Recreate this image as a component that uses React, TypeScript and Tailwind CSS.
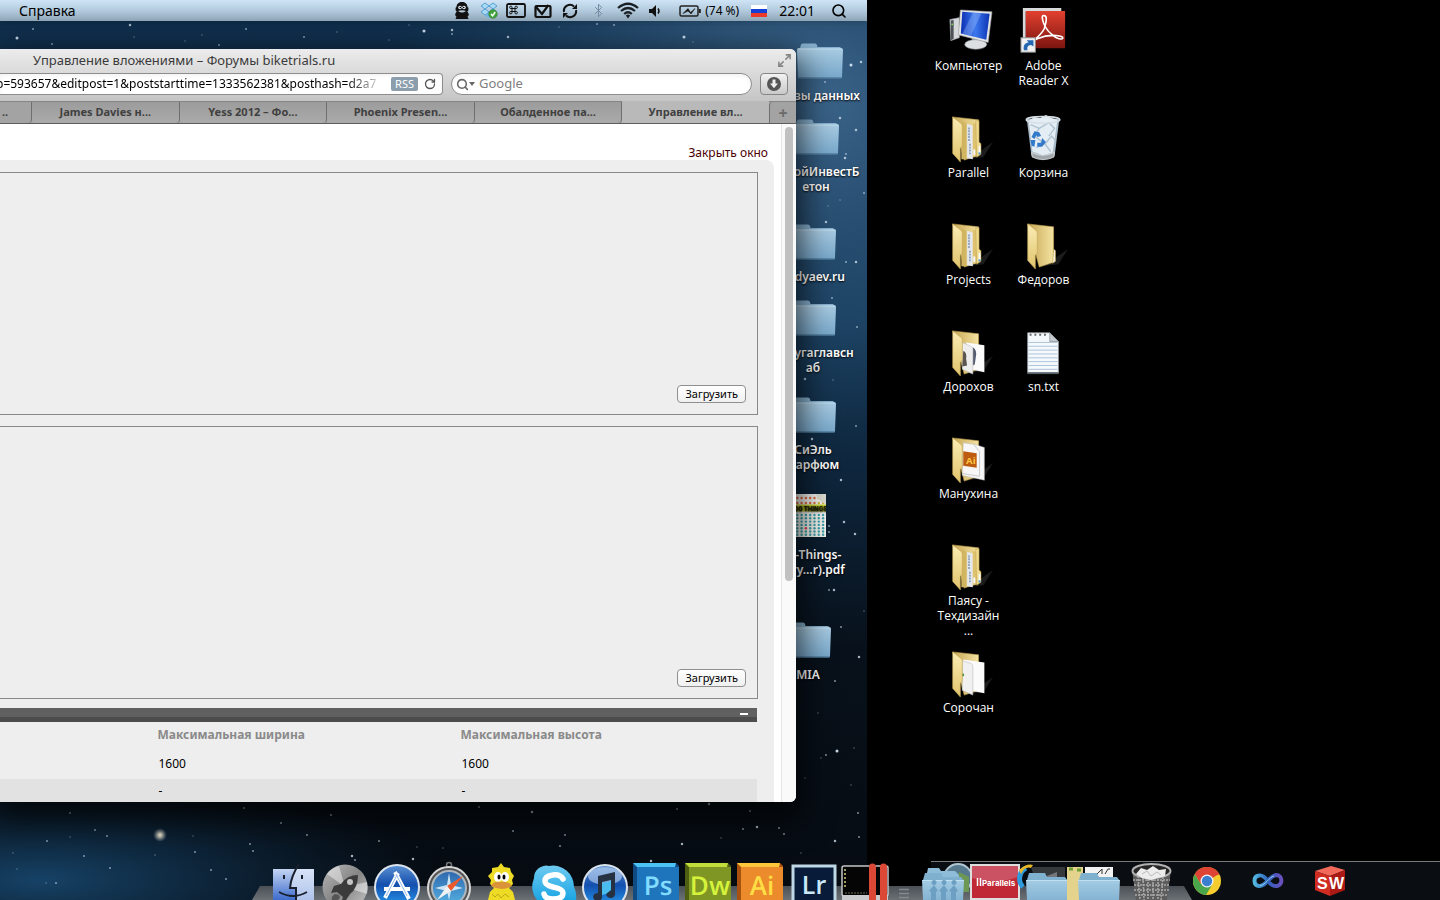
import type { ReactNode } from 'react';
import { Bluetooth, Maximize2, RotateCw, Search, Wifi } from 'lucide-react';

const stars = [
  [47, 841, 2], [70, 837, 1], [107, 836, 2], [84, 856, 2], [95, 830, 2], [46, 883, 1], [56, 883, 2], [110, 868, 2], [17, 869, 1],
  [13, 853, 1], [244, 808, 2], [193, 836, 1], [195, 852, 2], [250, 844, 2], [253, 851, 2], [226, 879, 2], [211, 870, 2],
  [281, 823, 2], [307, 835, 2], [352, 856, 3], [355, 860, 2], [379, 841, 2], [413, 859, 3], [443, 848, 1], [417, 847, 1],
  [513, 831, 2], [532, 812, 3], [560, 846, 2], [565, 835, 2], [479, 807, 2], [331, 815, 2], [70, 813, 2], [155, 855, 1],
  [837, 751, 4], [826, 755, 2], [821, 758, 1], [854, 748, 1], [858, 813, 2], [859, 837, 2], [835, 841, 3], [757, 827, 3],
  [750, 811, 2], [682, 844, 3], [677, 809, 2], [709, 804, 3], [651, 861, 3], [779, 828, 2], [784, 834, 2], [743, 829, 2],
  [721, 838, 1], [835, 681, 2], [859, 657, 3], [818, 713, 1], [805, 778, 1], [851, 785, 1], [801, 853, 1],
  [33, 29, 2], [17, 38, 4], [52, 44, 2], [130, 25, 3], [134, 37, 1], [246, 29, 2], [304, 37, 2], [337, 32, 1], [409, 25, 1],
  [424, 31, 4], [185, 41, 1], [219, 45, 2], [452, 30, 3], [452, 34, 2], [508, 37, 3], [597, 24, 2], [614, 25, 2],
  [684, 37, 4], [559, 27, 1], [389, 40, 1], [202, 35, 1], [693, 42, 1],
  [851, 65, 4], [861, 62, 3], [840, 118, 3], [856, 130, 3], [845, 158, 3], [846, 154, 2], [826, 222, 3], [856, 262, 3],
  [846, 262, 2], [825, 82, 2], [828, 206, 1], [864, 193, 2], [832, 298, 2], [857, 327, 2], [848, 174, 1], [840, 200, 1],
  [805, 379, 3], [812, 439, 3], [856, 426, 2], [844, 522, 3], [855, 534, 3], [829, 590, 2], [834, 590, 3], [841, 627, 2],
  [812, 466, 1], [841, 480, 3], [829, 526, 2], [829, 532, 2], [864, 611, 1], [833, 380, 1],
];

const desktopItems = [
  { name: ['Базы данных'], pos: 'top-[43px] -right-[7px]' },
  { name: ['СтройИнвестБ', 'етон'], pos: 'top-[119px] -right-[3px]' },
  { name: ['Fedyaev.ru'], pos: 'top-[224px] right-0' },
  { name: ['Калугаглавсн', 'аб'], pos: 'top-[300px] right-0' },
  { name: ['СиЭль', 'Парфюм'], pos: 'top-[397px] right-0' },
  { name: ['100-Things-', 'Every…r).pdf'], pos: 'top-[494px] right-[5px]', pdf: true },
  { name: ['MIA'], pos: 'top-[622px] right-[5px]' },
];

const tabs = ['James Davies н...', 'Yess 2012 – Фо...', 'Phoenix Presen...', 'Обалденное па...'];

function Sky() {
  return (
    <svg className="absolute inset-0 size-full" viewBox="0 0 867 900" preserveAspectRatio="none" aria-hidden="true">
      <defs>
        <linearGradient id="sky" x1="0" y1="0" x2="0" y2="1">
          <stop offset="0" stopColor="#0f2e4b" />
          <stop offset="0.35" stopColor="#163a59" />
          <stop offset="0.55" stopColor="#0d2338" />
          <stop offset="0.72" stopColor="#08111b" />
          <stop offset="1" stopColor="#060b11" />
        </linearGradient>
        <radialGradient id="haze">
          <stop offset="0" stopColor="#426d94" stopOpacity="0.9" />
          <stop offset="1" stopColor="#2a5379" stopOpacity="0" />
        </radialGradient>
        <radialGradient id="hazeLow">
          <stop offset="0" stopColor="#17456b" stopOpacity="0.95" />
          <stop offset="1" stopColor="#0e2c45" stopOpacity="0" />
        </radialGradient>
        <radialGradient id="glow">
          <stop offset="0" stopColor="#fffbe8" />
          <stop offset="0.35" stopColor="#d6d0bd" stopOpacity="0.8" />
          <stop offset="1" stopColor="#8899a8" stopOpacity="0" />
        </radialGradient>
      </defs>
      <rect width="867" height="900" fill="url(#sky)" />
      <ellipse cx="800" cy="100" rx="420" ry="330" fill="url(#haze)" />
      <ellipse cx="40" cy="880" rx="400" ry="110" fill="url(#hazeLow)" />
      {stars.map(([x, y, s]) => (
        <circle key={`${x}-${y}`} cx={x} cy={y} r={0.5 + s * 0.25} fill="#d5e6f5" opacity={0.25 + s * 0.17} />
      ))}
      <circle cx="160" cy="835" r="7" fill="url(#glow)" />
    </svg>
  );
}

function MacFolder({ className }: { className?: string }) {
  return (
    <svg className={className} width="48" height="36" viewBox="0 0 48 36" aria-hidden="true">
      <defs>
        <linearGradient id="macFolder" x1="0" y1="0" x2="0" y2="1">
          <stop offset="0" stopColor="#a9cce3" />
          <stop offset="1" stopColor="#78a8cb" />
        </linearGradient>
      </defs>
      <path d="M2 6 Q2 5 4 5 L5 1.500 Q5.500 .5 7 .5 H19 Q20.500 .5 21 2 L21.500 4 H44 L46 6 V10 H2Z" fill="#88b2d0" />
      <path d="M1 7 Q1 5.500 2.500 5.500 H45.500 Q47 5.500 47 7 L46 34 Q46 35.500 44.500 35.500 H3 Q2 35.500 2 34Z" fill="url(#macFolder)" />
      <path d="M1.500 6 H46.500" stroke="#c2dff0" />
      <path d="M2.500 35 H45.500" stroke="#3e6888" />
    </svg>
  );
}

function PdfFile() {
  const dots: ReactNode[] = [];
  for (let r = 0; r < 9; r++) {
    for (let c = 0; c < 8; c++) {
      const top = r < 2;
      dots.push(
        <circle key={`${r}-${c}`} cx={3 + c * 4.3} cy={top ? 4 + r * 5 : 21 + (r - 2) * 3.3} r="1.2"
          fill={top ? ['#e76a3c', '#d9b53a'][c > 5 ? 1 : 0] : r === 6 && c === 3 ? '#e33d4f' : '#3fa5ad'} />
      );
    }
  }
  return (
    <svg width="36" height="44" viewBox="0 0 36 44" aria-hidden="true">
      <rect width="36" height="43" fill="#f5f5f1" />
      {dots}
      <rect y="10.500" width="36" height="7" fill="#c9d32c" />
      <text x="4" y="16.500" fontSize="6" fontWeight="900" fontFamily="Inter, sans-serif" fill="#1e220b">00 THINGS</text>
      <path d="M26 0 H36 V10 Q29 8 26 0Z" fill="#deddd2" />
    </svg>
  );
}

function MenuBar() {
  return (
    <header className="relative z-20 flex h-[21px] items-center bg-linear-to-b from-[#cfe4f6] via-[#b3cbde] to-[#8ea5b6] pr-5 pl-[19px] text-sm text-black shadow-md">
      <button className="mr-auto">Справка</button>
      <span className="flex w-[27px] justify-center">
        <svg width="16" height="18" viewBox="0 0 16 18" aria-label="Adium">
          <path d="M8 0 C11 0 13.500 2 13.500 5 Q14.500 5 14.500 7 Q14.500 9 13.200 9.500 C15.500 12 15 14 13.500 14.500 L14.500 17 H1.500 L2.500 14.500 C1 14 .5 12 2.800 9.500 Q1.500 9 1.500 7 Q1.500 5 2.500 5 C2.500 2 5 0 8 0Z" fill="#111" />
          <circle cx="6" cy="5.500" r="1.800" fill="#dce9f3" /><circle cx="10" cy="5.500" r="1.800" fill="#dce9f3" />
          <circle cx="6.300" cy="5.500" r=".8" /><circle cx="9.700" cy="5.500" r=".8" />
          <path d="M4 9 Q8 7.500 12 9 Q8 12 4 9Z" fill="#b8cbda" />
        </svg>
      </span>
      <span className="flex w-[27px] justify-center">
        <svg width="18" height="17" viewBox="0 0 18 17" aria-label="Dropbox">
          <path d="M5 1 L9 4 L5 7 L1 4Z M13 1 L17 4 L13 7 L9 4Z M5 7 L9 10 L5 13 L1 10Z M13 7 L17 10 L13 13 L9 10Z" fill="#a9daf6" stroke="#3f92cc" strokeWidth=".8" />
          <path d="M5 13.500 L9 11 L13 13.500 L9 16Z" fill="#6bb5e2" />
          <circle cx="13" cy="12" r="4.300" fill="#3fa33a" stroke="#2a7427" strokeWidth=".5" />
          <path d="M11 12 L12.600 13.800 L15.200 10" stroke="#fff" strokeWidth="1.500" fill="none" />
        </svg>
      </span>
      <span className="flex w-[27px] justify-center">
        <svg width="20" height="15" viewBox="0 0 20 15" fill="none" stroke="#111" aria-label="Command">
          <rect x="1" y="1" width="18" height="13" rx="1.500" strokeWidth="1.800" />
          <path d="M6 5.500 H9 V8.500 H6Z M6 5.500 H4.800 A1.200 1.200 0 1 1 6 4.300Z M9 5.500 V4.300 A1.200 1.200 0 1 1 10.200 5.500Z M9 8.500 H10.200 A1.200 1.200 0 1 1 9 9.700Z M6 8.500 V9.700 A1.200 1.200 0 1 1 4.800 8.500Z" strokeWidth="1" />
        </svg>
      </span>
      <span className="flex w-[27px] justify-center">
        <svg width="18" height="16" viewBox="0 0 18 16" fill="none" stroke="#111" strokeWidth="2.200" aria-label="Mail">
          <rect x="1.500" y="3" width="15" height="11" rx="1" />
          <path d="M2 4 L8 11 L14.500 2" />
        </svg>
      </span>
      <span className="flex w-[27px] justify-center">
        <svg width="18" height="16" viewBox="0 0 18 16" fill="none" stroke="#111" strokeWidth="2" aria-label="Sync">
          <path d="M3 9 A6 6 0 0 1 13 3.500 M15 7 A6 6 0 0 1 5 12.500" />
          <path d="M16 1 V6 H11Z M2 15 V10 H7Z" fill="#111" stroke="none" />
        </svg>
      </span>
      <span className="flex w-[30px] justify-center text-[#7389a0]"><Bluetooth size={15} strokeWidth={1.5} /></span>
      <span className="flex w-[30px] justify-center">
        <svg width="22" height="17" viewBox="0 0 22 17" fill="none" stroke="#1a2026" strokeWidth="2.200" aria-label="Wi-Fi">
          <path d="M1 6 Q11 -2.500 21 6 M4 9 Q11 3 18 9 M7.200 12 Q11 8.500 14.800 12" />
          <path d="M8.800 13.500 Q11 11.500 13.200 13.500 L11 16.500Z" fill="#1a2026" stroke="none" />
        </svg>
      </span>
      <span className="flex w-6 justify-center">
        <svg width="12" height="12" viewBox="0 0 12 12" aria-label="Volume">
          <path d="M0 4 H3 L7 0 V12 L3 8 H0Z" fill="#111" />
          <path d="M9 3.500 Q11 6 9 8.500" stroke="#111" strokeWidth="1.500" fill="none" />
        </svg>
      </span>
      <span className="flex w-[38px] justify-end pr-1">
        <svg width="22" height="12" viewBox="0 0 22 12" fill="none" stroke="#222" aria-label="Battery">
          <rect x="1" y="1" width="18" height="10" rx="1.500" strokeWidth="1.500" />
          <path d="M20.800 4 V8" strokeWidth="2" />
          <path d="M4 8.500 L9 3.500 L11.500 7.500 L16 3.500 L12 9 L9 6Z" fill="#111" strokeWidth=".6" />
        </svg>
      </span>
      <span className="text-xs">(74 %)</span>
      <svg className="mr-3 ml-3" width="16" height="12" viewBox="0 0 16 12" aria-label="RU">
        <rect width="16" height="4" fill="#fff" /><rect y="4" width="16" height="4" fill="#1540d8" /><rect y="8" width="16" height="4" fill="#ec3a2a" />
      </svg>
      <time className="mr-4">22:01</time>
      <Search size={16} strokeWidth={2.4} />
    </header>
  );
}

function BrowserWindow() {
  return (
    <section className="absolute top-[49px] right-[71px] left-0 z-10 overflow-hidden rounded-r-md bg-white shadow-[0_12px_32px_6px_rgba(0,0,0,0.7)]">
      <div className="relative bg-linear-to-b from-[#ececec] to-[#b4b4b4]">
        <h1 className="h-6 pl-[33px] text-[13px] leading-[23px] text-[#3b3b3b]">Управление вложениями – Форумы biketrials.ru</h1>
        <Maximize2 className="absolute top-1 right-1 text-[#858585]" size={15} strokeWidth={2.5} />
        <div className="flex h-7 items-start pr-2">
          <div className="flex h-[22px] w-[443px] items-center rounded-r border border-l-0 border-[#8d8d8d] bg-white pr-[6px] shadow-inner">
            <input
              aria-label="Адрес"
              className="-ml-1 min-w-0 flex-1 bg-transparent mask-r-from-90% text-[12px] text-black outline-none"
              defaultValue="p=593657&editpost=1&poststarttime=1333562381&posthash=d2a7"
            />
            <button className="mx-[6px] h-[14px] rounded-xs bg-[#8c9dac] px-1 text-[11px] leading-[14px] text-white">RSS</button>
            <button aria-label="Обновить" className="text-[#555]"><RotateCw size={12} strokeWidth={2.6} /></button>
          </div>
          <label className="mx-2 flex h-[22px] flex-1 items-center rounded-full border border-[#8d8d8d] bg-white pl-1 shadow-inner">
            <Search size={13} strokeWidth={2.8} className="text-[#666]" />
            <span className="mr-1 border-x-3 border-t-4 border-x-transparent border-t-[#666]" />
            <input aria-label="Google" placeholder="Google" className="min-w-0 flex-1 bg-transparent text-[13px] outline-none placeholder:text-[#808080]" />
          </label>
          <button aria-label="Загрузки" className="flex h-[22px] w-7 items-center justify-center rounded border border-[#858585] bg-linear-to-b from-[#f2f2f2] to-[#c9c9c9]">
            <svg width="14" height="14" viewBox="0 0 14 14">
              <circle cx="7" cy="7" r="7" fill="#555" />
              <path d="M5.500 2.500 H8.500 V6.500 H11 L7 11.200 L3 6.500 H5.500Z" fill="#eee" />
            </svg>
          </button>
        </div>
        <nav className="flex h-[23px] border-y border-t-[#858585] border-b-[#5d5d5d] bg-[#a3a3a3] text-[11px] font-bold text-[#404040]">
          <button className="w-8 rounded-b border-r border-[#6f6f6f] pl-[2px] text-left">..</button>
          {tabs.map((tab) => (
            <button key={tab} className="flex-1 truncate rounded-b border-r border-[#6f6f6f] bg-linear-to-b from-[#9c9c9c] to-[#aaaaaa] px-1">{tab}</button>
          ))}
          <button className="-mt-px flex-1 truncate bg-[#b9b9b9] px-1">Управление вл...</button>
          <button aria-label="Новая вкладка" className="w-[27px] rounded-tl border-l border-[#6f6f6f] text-base leading-5 text-[#6a6a6a]">+</button>
        </nav>
      </div>

      <div className="flex text-xs">
        <main className="min-w-0 flex-1 pt-[22px] pr-[7px]">
          <p className="pr-[6px] text-right leading-[14px]"><a href="#close" className="text-[#4c0000]">Закрыть окно</a></p>
          <div className="rounded-tr-lg bg-[#eee] pt-3 pr-4">
            <div className="flex h-[243px] items-end justify-end border border-l-0 border-[#888] p-[11px]">
              <UploadButton />
            </div>
            <div className="mt-[11px] flex h-[273px] items-end justify-end border border-l-0 border-[#888] p-[11px]">
              <UploadButton />
            </div>
            <div className="mt-[9px] mr-px flex h-[14px] justify-end border-b-[5px] border-[#4c4c4c] bg-[#606060] pt-[5px] pr-[9px]">
              <span className="h-[2px] w-2 bg-white" />
            </div>
            <table className="w-full table-fixed border-r border-[#eee] text-left">
              <thead>
                <tr className="h-[26px] text-[#8a8a8a]">
                  <td className="w-[20%]" />
                  <th className="w-[40%] pl-[6px]">Максимальная ширина</th>
                  <th className="pl-[6px]">Максимальная высота</th>
                </tr>
              </thead>
              <tbody>
                <tr className="h-[31px]"><td /><td className="pl-[7px]">1600</td><td className="pl-[7px]">1600</td></tr>
                <tr className="h-[23px] bg-[#e2e2e2]"><td /><td className="pl-[7px]">-</td><td className="pl-[7px]">-</td></tr>
              </tbody>
            </table>
          </div>
        </main>
        <div className="w-[15px] border-l border-[#e5e5e5] bg-[#fafafa] pt-[3px] pl-[3px]">
          <div className="h-[454px] w-2 rounded-full bg-[#c1c1c1]" />
        </div>
      </div>
    </section>
  );
}

function UploadButton() {
  return (
    <button className="h-[18px] rounded border border-[#8f8f8f] bg-linear-to-b from-white to-[#f0f0f0] px-[7px] text-[11px] leading-4 text-black">Загрузить</button>
  );
}

function WinFolder({ kind }: { kind: string }) {
  return (
    <>
      <path d="M22 46 L36 38 L50 28 L40 44Z" fill="#1c1c1c" />
      <path d="M8 2 L35 5 V42 L20 47Z" fill="url(#winBack)" stroke="#b99b4b" strokeWidth=".6" />
      {kind === 'stack' && (
        <>
          <path d="M17 6 L22 9 V46 L17 46Z" fill="#d2b561" />
          <path d="M23 9 L29 11 V46 L23 45Z" fill="#e4e7ec" />
          <path d="M25 13 V28 M26 30 V42" stroke="#6886a6" strokeWidth="1.300" strokeDasharray="2 1" />
          <path d="M29 8 L32 9 V27 L33 30 V43 L29 44Z" fill="#dfc26d" />
          <path d="M32 6 L35.500 6 V28 L37.500 30 V41 L33 44Z" fill="#efd98d" stroke="#b49440" strokeWidth=".5" />
          <path d="M30.500 36 V42 M36 32 V40" stroke="#f5f8fc" strokeWidth="2" />
          <path d="M36 39 V41" stroke="#3d8ed0" strokeWidth="2" />
        </>
      )}
      {kind === 'papers' && (
        <>
          <path d="M19 10 L41 13 V45 L19 41Z" fill="#fbfbfb" />
          <path d="M18 11 L27 14 Q29 15 29 17 V47 L18 42Z" fill="#f0f0f0" stroke="#bbb" strokeWidth=".6" />
          <circle cx="18.500" cy="26" r="1.500" fill="#4b8b3b" />
        </>
      )}
      {kind === 'photos' && (
        <>
          <path d="M22 14 L41 17 V45 L22 41Z" fill="#fbfbfb" />
          <path d="M29 19 Q34 22 32 30 L31 37 L29 38Z" fill="#565d73" />
          <path d="M18 14 L27 18 Q29 19 29 21 V47 L18 42Z" fill="#ededed" stroke="#bbb" strokeWidth=".6" />
          <path d="M19 23 Q23 24 22 31 L23 38 L18 39Z" fill="#5b5652" />
        </>
      )}
      {kind === 'ai' && (
        <>
          <path d="M19 7 L32 9 L41 12 V46 L18 41Z" fill="#f7f7f7" stroke="#bbb" strokeWidth=".5" />
          <path d="M30 9 L36 16 V42 L18 39" fill="none" stroke="#c9c9c9" />
          <path d="M19 16 L33 18 V33 L19 31Z" fill="#bd5c11" />
          <text x="22" y="29" fontSize="10" fontWeight="700" fontFamily="Open Sans, sans-serif" fill="#ffc845">Ai</text>
        </>
      )}
      {kind === 'empty' && <path d="M35 28 L37 30 V41 L34 43Z" fill="#f5f0d8" stroke="#bb9d49" strokeWidth=".6" />}
      <path d="M8 2 L17 9 Q18 10 18 12 V32 L16 35 V49 L8 40Z" fill="url(#winFront)" stroke="#c1a453" strokeWidth=".6" />
    </>
  );
}

function Computer() {
  return (
    <>
      <path d="M5 12 L15 10 V31 L6 34Z" fill="#d5d8db" stroke="#858a8f" strokeWidth=".6" />
      <path d="M6 13 L9 12.500 V32 L6 33.500Z" fill="#4e5256" /><circle cx="7.500" cy="17" r=".9" fill="#7be04a" />
      <path d="M28 30 L37 32 V40 H28Z" fill="#9da2a6" />
      <ellipse cx="32" cy="38" rx="11.500" ry="5" fill="#dde0e2" stroke="#909599" strokeWidth=".6" />
      <path d="M16 2 L49 4 L45 36 L14 28Z" fill="#e3e5e7" stroke="#999" strokeWidth=".6" />
      <path d="M18 4 L46.500 6 L43 33 L16.500 26.500Z" fill="url(#screen)" />
      <path d="M29 5 L38 5.500 L27 29 L18 27Z" fill="#a7c5ff" opacity=".35" />
    </>
  );
}

function Reader() {
  return (
    <>
      <path d="M3 0 H43 V4 H6 V40 L3 36Z" fill="#d7d8da" />
      <path d="M6 3 H47 V42 H10 L6 42Z" fill="url(#reader)" />
      <path d="M25 8 C22 7 23 13 26 19 C29 25 39 34 44 32 C48 29 32 26 18 32 C10 36 25 27 26 19 C28 12 28 8 25 8Z" fill="none" stroke="#fff" strokeWidth="1.700" />
      <rect x="1" y="31" width="15" height="15" fill="#f1f1f1" stroke="#8e8e8e" />
      <path d="M4 44 C3 38 6 36 9 36 L7 33.500 H14 V40 L11.500 38.500 C8 39 7 41 8 44Z" fill="#2567b1" />
    </>
  );
}

function RecycleBin() {
  return (
    <>
      <path d="M7 4 L41 4 L36 43 Q24 49 12 43Z" fill="#a8bac8" />
      <path d="M9 6 L15 2 L21 3 L27 0 L33 3 L39 5 L34 39 L24 42 L13 38Z" fill="#e4edf4" />
      <path d="M11 10 L20 14 L15 22 L26 30 L33 22 L37 27 M20 14 L30 8 L36 14 L30 22 M17 34 L26 30 L32 38" fill="none" stroke="#b0c2d0" strokeWidth="1.500" />
      <ellipse cx="24" cy="5" rx="17.500" ry="3.500" fill="none" stroke="#d6dfe5" strokeWidth="1.500" />
      <path d="M12 23 L15 17 L20 18 L22 22 L18 23 L17 21 L15 25Z M11 26 L16 26 L15 33 L12 32Z M23 24 L27 28 L23 33 L18 33 L18 29 L22 29Z" fill="#347acb" />
      <path d="M12 39 Q24 45 36 39 L35 44 Q24 49 13 44Z" fill="#a1a7ab" stroke="#dfe3e6" strokeWidth=".8" />
    </>
  );
}

function TextFile() {
  return (
    <>
      <path d="M8 4 H31 L40 13 V46 H8Z" fill="#f6f9fc" stroke="#9aa4ad" strokeWidth=".8" />
      <path d="M9 14 H39 M9 18 H39 M9 22 H39 M9 26 H39 M9 30 H39 M9 34 H39 M9 38 H39 M9 42 H39" stroke="#a9c3d7" />
      <path d="M31 4 V13 H40Z" fill="#c5cbd0" stroke="#81888e" strokeWidth=".7" />
      <path d="M10 6 h2 M15 6 h2 M20 6 h2 M25 6 h2" stroke="#666" strokeWidth="2" />
      <path d="M8 46 H40" stroke="#566068" strokeWidth="2" />
    </>
  );
}

const shortcuts = [
  { label: 'Компьютер', icon: <Computer />, at: 'col-start-1 row-start-1' },
  { label: 'Parallel', icon: <WinFolder kind="stack" />, at: 'col-start-1 row-start-2' },
  { label: 'Projects', icon: <WinFolder kind="stack" />, at: 'col-start-1 row-start-3' },
  { label: 'Дорохов', icon: <WinFolder kind="photos" />, at: 'col-start-1 row-start-4' },
  { label: 'Манухина', icon: <WinFolder kind="ai" />, at: 'col-start-1 row-start-5' },
  { label: 'Паясу - Техдизайн ...', icon: <WinFolder kind="stack" />, at: 'col-start-1 row-start-6' },
  { label: 'Сорочан', icon: <WinFolder kind="papers" />, at: 'col-start-1 row-start-7' },
  { label: 'Adobe Reader X', icon: <Reader />, at: 'col-start-2 row-start-1' },
  { label: 'Корзина', icon: <RecycleBin />, at: 'col-start-2 row-start-2' },
  { label: 'Федоров', icon: <WinFolder kind="empty" />, at: 'col-start-2 row-start-3' },
  { label: 'sn.txt', icon: <TextFile />, at: 'col-start-2 row-start-4' },
];

function WindowsDesktop() {
  return (
    <section className="flex min-w-0 flex-col bg-black pl-16 font-['Open_Sans','Noto_Sans',sans-serif]">
      <svg width="0" height="0" className="absolute" aria-hidden="true">
        <linearGradient id="winBack"><stop stopColor="#c6a654" /><stop offset="1" stopColor="#f4e3a1" /></linearGradient>
        <linearGradient id="winFront" x2="0" y2="1"><stop stopColor="#fbedb4" /><stop offset="1" stopColor="#e0c36c" /></linearGradient>
        <linearGradient id="screen"><stop stopColor="#0b2fb2" /><stop offset=".5" stopColor="#3c78ee" /><stop offset="1" stopColor="#0c34b4" /></linearGradient>
        <linearGradient id="reader" x2="0" y2="1"><stop stopColor="#e2402f" /><stop offset="1" stopColor="#7c1510" /></linearGradient>
      </svg>
      <div className="grid flex-1 auto-rows-[107px] grid-cols-[75px_75px] pt-2">
        {shortcuts.map((s) => (
          <button key={s.label} className={`flex flex-col items-center text-xs leading-[15px] text-white ${s.at}`}>
            <svg width="48" height="48" viewBox="0 0 50 50" className="mb-[2px]" aria-hidden="true">{s.icon}</svg>
            <span className="w-[72px]">{s.label}</span>
          </button>
        ))}
      </div>
      <footer className="flex h-[39px] items-center border-t border-[#77797c] bg-[#0a0e12] pl-[245px]">
        <button aria-label="Chrome" className="flex w-[61px] justify-center">
          <svg width="28" height="28" viewBox="0 0 28 28">
            <circle cx="14" cy="14" r="14" fill="#f6cd2f" />
            <path d="M14 14 L1.900 7 A14 14 0 0 1 26.100 7Z" fill="#de4435" />
            <path d="M14 14 L8 17 L1.900 7 A14 14 0 0 0 13 28 L19 18Z" fill="#4aa64d" />
            <path d="M14 7.500 H26.400 A14 14 0 0 0 1.900 7 L8 17Z" fill="#de4435" />
            <circle cx="14" cy="14" r="6.500" fill="#f3f3f3" /><circle cx="14" cy="14" r="5.200" fill="#3b7fd0" />
          </svg>
        </button>
        <button aria-label="Visual Studio" className="flex w-[61px] justify-center">
          <svg width="32" height="18" viewBox="0 0 32 18" fill="none" strokeWidth="4">
            <defs><linearGradient id="vs"><stop stopColor="#52b5df" /><stop offset=".5" stopColor="#2e63bd" /><stop offset="1" stopColor="#6850bd" /></linearGradient></defs>
            <path d="M16 9 C12 4 9 3 7 3.500 C1 4.500 1 13 7 14 C14 15 17 4 24 3 C31 3 31 13 25 14 C21 14.500 18 12 16 9Z" stroke="url(#vs)" />
            <path d="M8 13.500 C14 13 17 5 22 4" stroke="#90d1ee" strokeWidth="1" />
          </svg>
        </button>
        <button aria-label="SolidWorks" className="flex w-[64px] justify-center">
          <svg width="32" height="30" viewBox="0 0 32 30">
            <path d="M1 5 L17 0 L31 4 L16 10Z" fill="#f1695b" />
            <path d="M1 5 L16 10 V30 L1 24Z" fill="#d12c22" /><path d="M16 10 L31 4 V24 L16 30Z" fill="#aa1914" />
            <text x="3" y="23" fontSize="16" fontWeight="700" fontFamily="Liberation Sans, sans-serif" fill="#fff">S</text>
            <text x="15" y="23" fontSize="16" fontWeight="700" fontFamily="Liberation Sans, sans-serif" fill="#fff">W</text>
          </svg>
        </button>
      </footer>
    </section>
  );
}

function AdobeTile({ text, face, side, top, ink }: { text: string; face: string; side: string; top: string; ink: string }) {
  return (
    <>
      <path d="M2 3 H45 L48 6 V40 H2Z" fill={side} />
      <path d="M2 3 H45 L44 7 H6Z" fill={top} />
      <rect x="6" y="7" width="42" height="33" fill={face} />
      <text x="27" y="35" textAnchor="middle" fontSize="26" fontWeight="600" fontFamily="Open Sans, sans-serif" fill={ink} textRendering="geometricPrecision">{text}</text>
    </>
  );
}

function DockFolder({ behind, people }: { behind?: ReactNode; people?: boolean }) {
  return (
    <>
      {behind}
      <path d="M6 20 L8 13 H24 L26 17 H44 L47 21Z" fill="#7fb1cf" />
      <path d="M5 20 H47 L46 40 H6Z" fill="url(#dockFolder)" />
      <path d="M5 20.500 H47" stroke="#bfe0f2" />
      {people && (
        <path d="M17 25 a2.500 2.500 0 1 1 .1 0 L21 31 L19 32 V40 H14 V32 L12 31Z M27 25 a2.500 2.500 0 1 1 .1 0 L31 31 L29 32 V40 H24 V32 L22 31Z M37 25 a2.500 2.500 0 1 1 .1 0 L41 31 L39 32 V40 H34 V32 L32 31Z" fill="#6c9fc2" />
      )}
    </>
  );
}

const apps: { name: string; icon: ReactNode }[] = [
  {
    name: 'Finder',
    icon: (
      <>
        <rect x="6" y="9" width="41" height="31" fill="url(#finder)" />
        <path d="M27 9 H47 V40 H29 L28 28 H23 Q24 17 27 9Z" fill="#dfe8f8" opacity=".7" />
        <path d="M32 4 Q24 16 23 28 H29 V40 M12 32 Q26 40 40 32" stroke="#191f2c" strokeWidth="2" fill="none" />
        <path d="M17 15 V19 M35 15 V19" stroke="#191f2c" strokeWidth="2" />
      </>
    ),
  },
  {
    name: 'Launchpad',
    icon: (
      <>
        <circle cx="26" cy="27" r="22.500" fill="url(#metal)" />
        <path d="M26 27 L8 14 A22 22 0 0 1 20 6Z M26 27 L48 22 A22 22 0 0 1 48 34Z" fill="#fff" opacity=".45" />
        <path d="M39 15 Q28 15 22 24 L15 26 L12 33 L18 32 L24 37 L23 40 H27 L31 34 Q39 28 39 15Z" fill="#3b3b3b" />
        <circle cx="31" cy="22" r="3" fill="#c6c6c6" />
        <path d="M16 34 Q12 36 13 40 H19 Q22 38 20 35" fill="#555" />
      </>
    ),
  },
  {
    name: 'App Store',
    icon: (
      <>
        <circle cx="26" cy="27" r="22" fill="url(#blue)" stroke="#dbe3ec" strokeWidth="2" />
        <path d="M14 38 L27 13 M38 39 L24 12 M13 29 H39" stroke="#fff" strokeWidth="4" />
        <path d="M15 36 L26 15 M36 36 L25 14" stroke="#8fb7e8" strokeWidth="1" />
      </>
    ),
  },
  {
    name: 'Safari',
    icon: (
      <>
        <circle cx="26" cy="5" r="2.500" fill="none" stroke="#777" strokeWidth="1.500" />
        <circle cx="26" cy="28" r="21" fill="#555" stroke="#d6d6d6" strokeWidth="2" />
        <circle cx="26" cy="28" r="17" fill="url(#compass)" stroke="#aeb7bd" strokeWidth="2" />
        <path d="M26 13 L28 25 L40 28 L28 31 L26 40 L24 31 L12 28 L24 25Z" fill="#cfe6f6" />
        <path d="M40 16 L28 31 L24 26Z" fill="#ee5a2c" /><path d="M24 26 L28 31 L14 40Z" fill="#f1f1f1" />
      </>
    ),
  },
  {
    name: 'Adium',
    icon: (
      <>
        <path d="M26 3 L29 7 L35 8 L36 12 L39 16 L37 20 L38 24 L34 28 L38 32 L40 40 H13 L15 32 L19 28 L15 24 L16 20 L13 16 L17 12 L17 8 L23 7Z" fill="#eedb25" />
        <ellipse cx="23" cy="17" rx="4" ry="5" fill="#fff" /><ellipse cx="30" cy="17" rx="4" ry="5" fill="#fff" />
        <ellipse cx="24" cy="17" rx="1.500" ry="2.500" /><ellipse cx="29" cy="17" rx="1.500" ry="2.500" />
        <path d="M16 26 Q18 21 26 22 Q34 21 37 26 Q27 32 16 26Z" fill="#db933a" />
        <path d="M17 34 L20 37 L23 34 L26 38 L30 34 L34 37" stroke="#bda917" fill="none" />
      </>
    ),
  },
  {
    name: 'Skype',
    icon: (
      <>
        <path d="M7 18 A12 12 0 0 1 22 6 A21 21 0 0 1 47 27 Q50 33 49 40 H10 A22 22 0 0 1 7 18Z" fill="url(#skype)" />
        <path d="M36 19 Q33 14 26 15 Q18 16 18 21 Q18 25 26 27 Q36 29 36 33 Q36 39 26 39 Q18 39 17 34" fill="none" stroke="#fff" strokeWidth="5.500" strokeLinecap="round" />
      </>
    ),
  },
  {
    name: 'iTunes',
    icon: (
      <>
        <circle cx="26" cy="27" r="22" fill="url(#blue)" stroke="#dbe3ec" strokeWidth="2" />
        <ellipse cx="26" cy="16" rx="17" ry="9" fill="#d3e5fa" opacity=".55" />
        <path d="M19 16 L36 12 V33 A4.500 4 0 1 1 32 30 V20 L23 22 V36 A4.500 4 0 1 1 19 33Z" fill="#263142" />
        <path d="M23 23 L32 21 V30 L27 34 L23 35Z" fill="#49bdf0" />
      </>
    ),
  },
  { name: 'Photoshop', icon: <AdobeTile text="Ps" face="#1f75bc" side="#0f4a83" top="#4bc3f5" ink="#82dcff" /> },
  { name: 'Dreamweaver', icon: <AdobeTile text="Dw" face="#7f9624" side="#4e5f12" top="#c0dd3c" ink="#d6f33c" /> },
  { name: 'Illustrator', icon: <AdobeTile text="Ai" face="#ec8b2c" side="#a9520f" top="#ffc739" ink="#ffde45" /> },
  {
    name: 'Lightroom',
    icon: (
      <>
        <rect x="6" y="6" width="42" height="40" fill="#081b38" stroke="#bfd8e5" strokeWidth="3" />
        <text x="27" y="34" textAnchor="middle" fontSize="25" fontWeight="600" fontFamily="Open Sans, sans-serif" fill="#c9e8f7">Lr</text>
      </>
    ),
  },
  {
    name: 'Parallels Desktop',
    icon: (
      <>
        <rect x="3" y="6" width="46" height="30" rx="2" fill="#050505" stroke="#c5c5c5" strokeWidth="1.500" />
        <rect x="3" y="35" width="46" height="5" fill="#c9cbcc" />
        <path d="M6 9 V28" stroke="#9f9a5f" strokeWidth="2" strokeDasharray="2 2" />
        <path d="M6 33 H28" stroke="#6d6953" strokeDasharray="2 1" />
        <path d="M33.500 7 V40 M44.500 7 V40" stroke="#dc4836" strokeWidth="7" strokeLinecap="round" />
      </>
    ),
  },
];

const stacks: { name: string; icon: ReactNode }[] = [
  {
    name: 'Общие',
    icon: (
      <DockFolder people behind={
        <>
          <circle cx="41" cy="18" r="14" fill="#57798e" stroke="#afc6d2" strokeWidth="2" />
          <path d="M42 12 L52 17 V32 H40Z" fill="#6d9853" />
          <path d="M9 18 L11 8 H22 L24 11 H38 L42 15 V20Z" fill="#8dbdd9" />
        </>
      } />
    ),
  },
  {
    name: 'Parallels',
    icon: (
      <>
        <rect x="2" y="5" width="48" height="34" fill="#c02835" stroke="#dedede" strokeWidth="2" />
        <path d="M3 6 H49 V17 Q28 25 3 18Z" fill="#d0687c" opacity=".65" />
        <path d="M8.500 18 V26 M11.500 18 V26" stroke="#fff" strokeWidth="1.500" />
        <text x="13" y="25.500" fontSize="8" fontWeight="700" fontFamily="Inter, sans-serif" fill="#fff">Parallels</text>
      </>
    ),
  },
  {
    name: 'Программы',
    icon: (
      <DockFolder behind={
        <>
          <path d="M2 27 A12 12 0 0 1 5 8" fill="none" stroke="#2e9bdd" strokeWidth="5" />
          <path d="M-2 10 Q6 3 12 5 L10 8 Q4 6 0 14Z" fill="#e6b629" />
          <path d="M10 7 H44 V20 H14Z" fill="#36393c" /><path d="M18 19 L36 12 V20Z" fill="#73777b" />
        </>
      } />
    ),
  },
  {
    name: 'Документы',
    icon: (
      <DockFolder behind={
        <>
          <path d="M-6 7 H10 V40 H-6Z" fill="#e4d38c" /><path d="M-4 9 h4 M4 10 h4" stroke="#6f9f35" strokeWidth="3" />
          <path d="M12 7 H40 V19 H12Z" fill="#f2f2f2" /><path d="M24 14 L29 9 L29 14 M32 14 L35 9 L37 9" stroke="#333" fill="none" />
        </>
      } />
    ),
  },
  {
    name: 'Корзина',
    icon: (
      <>
        <path d="M7 10 L46 10 L42 40 H11Z" fill="#5d5d5d" />
        <path d="M8 20 H45 M9 25 H44 M9 30 H44 M10 35 H43 M13 16 L15 40 M18 18 L19 40 M23 19 V40 M28 19 V40 M33 19 V40 M38 17 L36 40" stroke="#a9a9a9" strokeDasharray="2 1" strokeWidth="1.500" />
        <ellipse cx="26.500" cy="11" rx="19" ry="7" fill="#262626" stroke="#b1b1b1" strokeWidth="2" />
        <path d="M11 14 L16 8 L22 10 L28 6 L34 10 L41 9 L40 16 L33 18 L26 20 L17 18Z" fill="#ececec" />
        <path d="M17 14 L22 11 L26 16 L32 12 L36 15" stroke="#bdbdbd" fill="none" />
      </>
    ),
  },
];

function DockItem({ name, children }: { name: string; children: ReactNode }) {
  return (
    <button aria-label={name} className="w-[52px]">
      <svg className="block overflow-visible" width="52" height="40" viewBox="0 0 52 40">{children}</svg>
    </button>
  );
}

function Dock() {
  return (
    <nav className="absolute bottom-0 left-[252px] z-30 flex h-10 overflow-hidden px-[15px]">
      <svg className="absolute inset-x-0 bottom-0 h-[14px] w-full" viewBox="0 0 936 14" preserveAspectRatio="none" aria-hidden="true">
        <defs>
          <linearGradient id="shelf" x2="0" y2="1"><stop stopColor="#4b5056" /><stop offset="1" stopColor="#6c7176" /></linearGradient>
          <linearGradient id="finder" x2="0" y2="1"><stop stopColor="#c4d5f3" /><stop offset="1" stopColor="#3e6ccc" /></linearGradient>
          <linearGradient id="metal" x2="1" y2="1"><stop stopColor="#b9b9b9" /><stop offset=".5" stopColor="#858585" /><stop offset="1" stopColor="#c8c8c8" /></linearGradient>
          <linearGradient id="blue" x2="0" y2="1"><stop stopColor="#5c91d2" /><stop offset=".45" stopColor="#134fae" /><stop offset="1" stopColor="#28a1f3" /></linearGradient>
          <linearGradient id="compass" x2="0" y2="1"><stop stopColor="#2f67ad" /><stop offset="1" stopColor="#54b1e2" /></linearGradient>
          <linearGradient id="skype" x2="0" y2="1"><stop stopColor="#6fcaf1" /><stop offset="1" stopColor="#1ca6e4" /></linearGradient>
          <linearGradient id="dockFolder" x2="0" y2="1"><stop stopColor="#a4cce4" /><stop offset="1" stopColor="#84b3d2" /></linearGradient>
        </defs>
        <path d="M8 0 H928 L936 14 H0Z" fill="url(#shelf)" />
      </svg>
      <div className="relative flex">
        {apps.map((a) => <DockItem key={a.name} name={a.name}>{a.icon}</DockItem>)}
        <svg width="26" height="40" viewBox="0 0 26 40" aria-hidden="true">
          <path d="M8 29.500 H18 M8 33.500 H18 M8 37.500 H18" stroke="#85898d" strokeWidth="1.500" />
        </svg>
        {stacks.map((s) => <DockItem key={s.name} name={s.name}>{s.icon}</DockItem>)}
      </div>
    </nav>
  );
}

export default function App() {
  return (
    <div className="relative grid min-h-screen grid-cols-[867fr_573fr] overflow-hidden bg-black font-['Noto_Sans','Open_Sans',sans-serif]">
      <section className="relative min-w-0 overflow-hidden">
        <Sky />
        <MenuBar />
        {desktopItems.map((item) => (
          <button key={item.pos} className={`absolute flex w-[108px] flex-col items-center text-xs leading-[15px] font-semibold text-white text-shadow-[0_1px_2px_#000] ${item.pos}`}>
            {item.pdf ? <PdfFile /> : <MacFolder />}
            <span className="mt-[9px]">{item.name.map((line) => <span key={line} className="block">{line}</span>)}</span>
          </button>
        ))}
        <BrowserWindow />
      </section>
      <WindowsDesktop />
      <Dock />
    </div>
  );
}
